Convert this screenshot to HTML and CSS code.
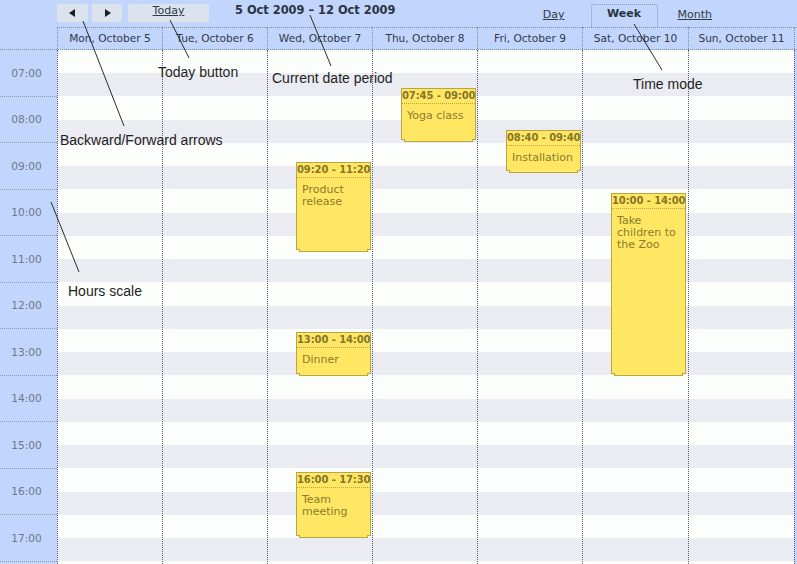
FILE: index.html
```html
<!DOCTYPE html>
<html>
<head>
<meta charset="utf-8">
<link rel="stylesheet" href="styles.css">
</head>
<body>
<div class="page">
  <div class="topbar">
    <div class="nav">
      <div class="btn prev"><span class="tri-left"></span></div>
      <div class="btn next"><span class="tri-right"></span></div>
      <div class="btn today"><span class="link">Today</span></div>
    </div>
    <div class="title">5 Oct 2009 – 12 Oct 2009</div>
    <div class="tabs">
      <span class="tab link">Day</span>
      <span class="tab active">Week</span>
      <span class="tab link">Month</span>
    </div>
  </div>
  <div class="header">
    <div class="corner"></div>
    <div class="dh">Mon, October 5</div>
    <div class="dh">Tue, October 6</div>
    <div class="dh">Wed, October 7</div>
    <div class="dh">Thu, October 8</div>
    <div class="dh">Fri, October 9</div>
    <div class="dh">Sat, October 10</div>
    <div class="dh">Sun, October 11</div>
    <div class="dh-end"></div>
  </div>
  <div class="grid">
    <div class="scale">
      <div class="hour">07:00</div>
      <div class="hour">08:00</div>
      <div class="hour">09:00</div>
      <div class="hour">10:00</div>
      <div class="hour">11:00</div>
      <div class="hour">12:00</div>
      <div class="hour">13:00</div>
      <div class="hour">14:00</div>
      <div class="hour">15:00</div>
      <div class="hour">16:00</div>
      <div class="hour">17:00</div>
      <div class="hour"></div>
    </div>
    <div class="day"></div>
    <div class="day"></div>
    <div class="day">
      <div class="event" style="top:112px;height:88px"><div class="ev-head">09:20 - 11:20</div><div class="ev-body">Product release</div></div>
      <div class="event" style="top:282px;height:42px"><div class="ev-head">13:00 - 14:00</div><div class="ev-body">Dinner</div></div>
      <div class="event" style="top:422px;height:64px"><div class="ev-head">16:00 - 17:30</div><div class="ev-body">Team meeting</div></div>
    </div>
    <div class="day">
      <div class="event" style="top:38px;height:52px"><div class="ev-head">07:45 - 09:00</div><div class="ev-body">Yoga class</div></div>
    </div>
    <div class="day">
      <div class="event" style="top:80px;height:41px"><div class="ev-head">08:40 - 09:40</div><div class="ev-body">Installation</div></div>
    </div>
    <div class="day">
      <div class="event" style="top:143px;height:181px"><div class="ev-head">10:00 - 14:00</div><div class="ev-body">Take children to the Zoo</div></div>
    </div>
    <div class="day"></div>
    <div class="grid-end"></div>
  </div>

  <svg class="arrows" width="797" height="564" viewBox="0 0 797 564">
    <line x1="83" y1="21" x2="124" y2="126"/>
    <line x1="170" y1="20" x2="189" y2="58"/>
    <line x1="310" y1="15" x2="331" y2="66"/>
    <line x1="634" y1="24" x2="662" y2="70"/>
    <line x1="51" y1="202" x2="79" y2="272"/>
  </svg>
  <div class="note n-today">Today button</div>
  <div class="note n-period">Current date period</div>
  <div class="note n-mode">Time mode</div>
  <div class="note n-arrows">Backward/Forward arrows</div>
  <div class="note n-hours">Hours scale</div>
</div>
</body>
</html>
```

FILE: styles.css
```css
* { box-sizing: border-box; }
html, body { margin: 0; padding: 0; }
body {
  width: 797px;
  height: 564px;
  overflow: hidden;
  font-family: "DejaVu Sans", Verdana, sans-serif;
  font-size: 11px;
  color: #2f3a48;
  background: #fff;
}
.page {
  position: relative;
  width: 797px;
  height: 564px;
  background: #c2d5fc;
}

/* top bar */
.topbar {
  height: 27px;
  display: flex;
  align-items: flex-start;
  padding-left: 57px;
  background: #c2d5fc;
}
.nav { display: flex; padding-top: 4px; }
.btn {
  height: 18px;
  background: #dbe3ec;
  border-radius: 2px;
  display: flex;
  align-items: center;
  justify-content: center;
}
.prev { width: 31px; }
.next { width: 30px; margin-left: 4px; }
.today { width: 81px; margin-left: 6px; }
.today .link { line-height: 12px; position: relative; top: -2px; }
.tri-left, .tri-right { width: 0; height: 0; border-top: 4.5px solid transparent; border-bottom: 4.5px solid transparent; }
.tri-left { border-right: 6px solid #1b1f26; margin-right: 1px; }
.tri-right { border-left: 6px solid #1b1f26; margin-left: 1px; }
.link { text-decoration: underline; color: #2f3a48; }
.title {
  margin-left: 26px;
  padding-top: 2px;
  font-weight: bold;
  font-size: 11.4px;
  line-height: 16px;
  color: #2a3340;
}
.tabs {
  margin-left: auto;
  margin-right: 85px;
  display: flex;
  align-items: flex-start;
  padding-top: 4px;
}
.tab { line-height: 19px; padding-top: 1px; }
.tabs .tab:first-child { margin-right: 26px; }
.tab.active {
  width: 67px;
  height: 23px;
  text-align: center;
  font-weight: bold;
  color: #2a3340;
  border: 1px dotted #8a97a8;
  border-bottom: none;
  border-radius: 3px 3px 0 0;
  padding-top: 0;
  line-height: 17px;
  margin-right: 20px;
}

/* day header row */
.header {
  display: flex;
  height: 23px;
  border-bottom: 1px dotted #7f8ca0;
}
.corner { width: 57px; flex: none; }
.dh {
  width: 105px;
  flex: none;
  border-top: 1px dotted #7f8ca0;
  border-left: 1px dotted #7f8ca0;
  text-align: center;
  font-size: 10.6px;
  line-height: 21px;
  color: #2f3a48;
  white-space: nowrap;
}
.dh:nth-child(n+7) { width: 106px; }
.dh-end { flex: 1; border-top: 1px dotted #7f8ca0; border-left: 1px dotted #7f8ca0; }

/* grid */
.grid { display: flex; height: 514px; overflow: hidden; }
.scale { width: 57px; flex: none; background: #c2d5fc; }
.hour {
  height: 46.5px;
  border-bottom: 1px dotted #8a97a8;
  display: flex;
  align-items: center;
  justify-content: center;
  padding-right: 4px;
  font-size: 10.6px;
  color: #6d7889;
}
.day {
  width: 105px;
  flex: none;
  position: relative;
  border-left: 1px dotted #4d5d7a;
  background: repeating-linear-gradient(to bottom, #fcfefc 0, #fcfefc 23.25px, #ebebf2 23.25px, #ebebf2 46.5px);
}
.day:nth-child(n+7) { width: 106px; }
.grid-end { flex: 1; border-left: 1px dotted #4d5d7a; background: #c2d5fc; }

/* events */
.event {
  position: absolute;
  left: 28px;
  width: 75px;
  background: #ffe763;
  border: 1px solid #b8a545;
  color: #8a7b2d;
}
.event::after {
  content: "";
  position: absolute;
  left: 2px;
  right: 2px;
  top: 100%;
  height: 2px;
  background: #ffe763;
  border: 1px solid #b8a545;
  border-top: none;
}
.ev-head {
  height: 15px;
  border-bottom: 1px dotted #b8a545;
  font-weight: bold;
  font-size: 10px;
  line-height: 14px;
  text-align: center;
  white-space: nowrap;
  letter-spacing: -0.1px;
  color: #857628;
}
.ev-body {
  padding: 6px 4px 0 5px;
  font-size: 11px;
  line-height: 12px;
}

/* annotations */
.arrows { position: absolute; left: 0; top: 0; pointer-events: none; }
.arrows line { stroke: #2b2b2b; stroke-width: 1; }
.note {
  position: absolute;
  font-family: "Liberation Sans", Arial, sans-serif;
  font-size: 14px;
  line-height: 16px;
  color: #1e1e1e;
  white-space: nowrap;
}
.n-today { left: 158px; top: 64px; }
.n-period { left: 272px; top: 70px; }
.n-mode { left: 633px; top: 76px; }
.n-arrows { left: 60px; top: 132px; }
.n-hours { left: 68px; top: 283px; }
```
